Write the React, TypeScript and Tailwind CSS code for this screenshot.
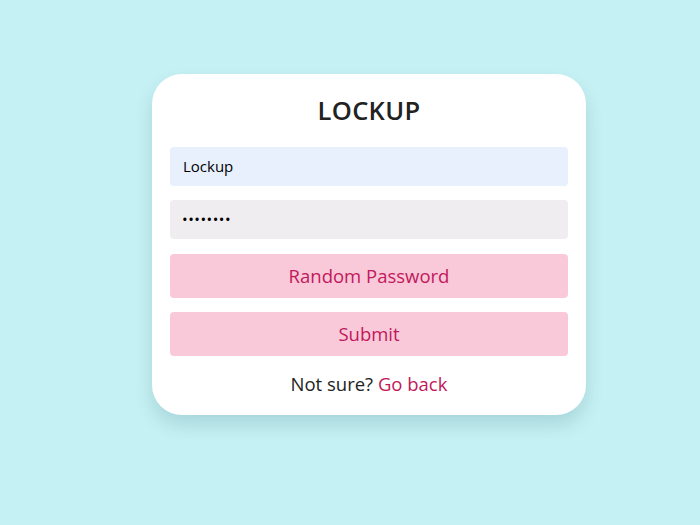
export default function App() {
  return (
    <div className="w-[700px] h-[525px] bg-[#c5f1f4] pt-[74px] pl-[152px]" style={{ fontFamily: '"Open Sans", sans-serif' }}>
      <div className="w-[434px] h-[341px] bg-white rounded-[30px] shadow-[0_10px_18px_rgba(0,60,70,0.14)] px-[18px] pt-[20px] flex flex-col">
        <h1 className="text-[25.5px] leading-[32px] font-semibold text-[#222] text-center tracking-[0.3px]">LOCKUP</h1>
        <div className="mt-[21px] h-[39px] rounded-[4px] bg-[#e8f0fe] flex items-center px-[13px] text-[15px] text-black">Lockup</div>
        <div className="mt-[14px] h-[39px] rounded-[4px] bg-[#efedef] flex items-center px-[12px] text-[15px] text-black tracking-[0.5px]">••••••••</div>
        <div className="mt-[15px] h-[44px] rounded-[4px] bg-[#f9c9da] flex items-center justify-center text-[18.5px] text-[#c2185b]">Random Password</div>
        <div className="mt-[14px] h-[44px] rounded-[4px] bg-[#f9c9da] flex items-center justify-center text-[18.5px] text-[#c2185b]">Submit</div>
        <div className="mt-[15px] text-center text-[18.5px] leading-[26px] text-[#222]">Not sure? <span className="text-[#c2185b]">Go back</span></div>
      </div>
    </div>
  );
}
